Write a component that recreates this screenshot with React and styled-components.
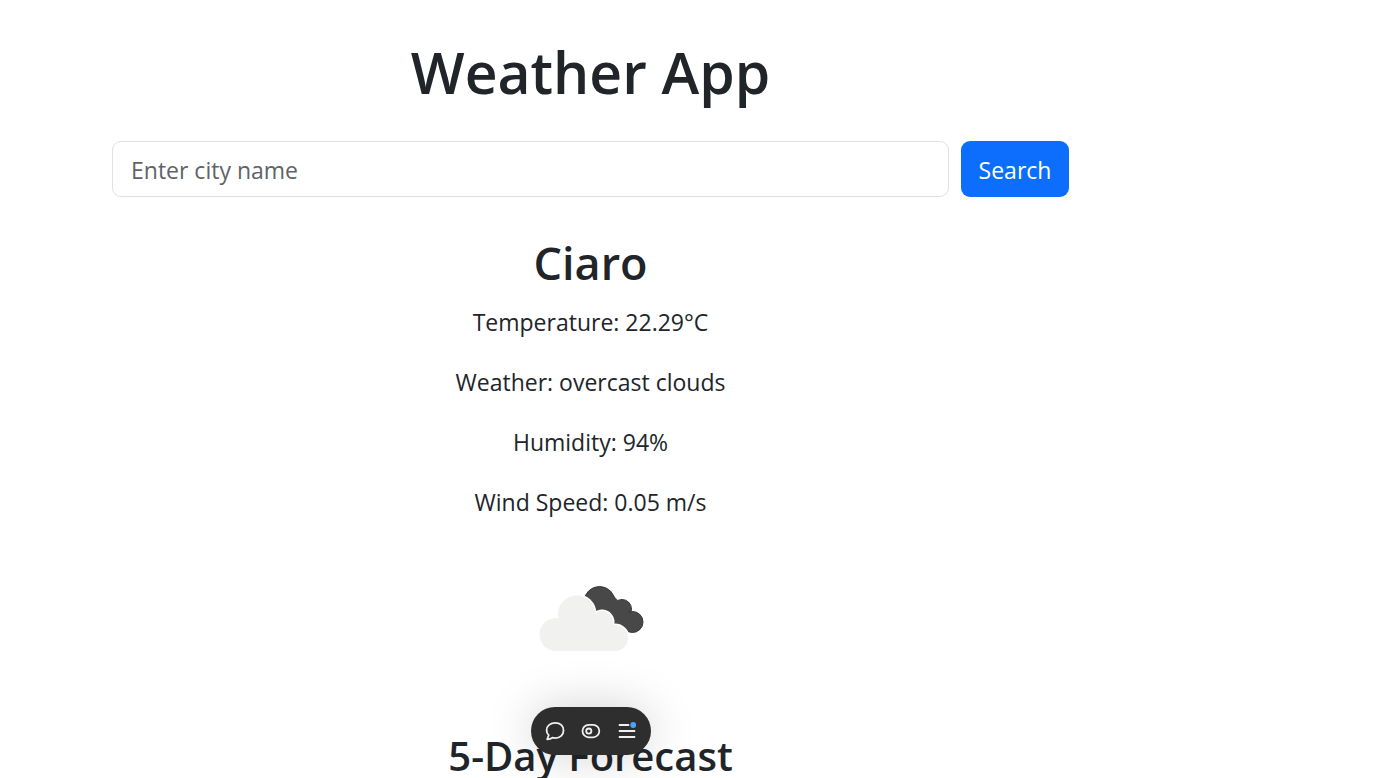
import React from "react";
import styled, { createGlobalStyle } from "styled-components";

const GlobalStyle = createGlobalStyle`
  *, *::before, *::after { box-sizing: border-box; }
  body {
    margin: 0;
    background: #fff;
    color: #212529;
    font-family: "Segoe UI", "Open Sans", "Noto Sans", sans-serif;
    font-size: 23px;
    line-height: 36px;
  }
`;

const Page = styled.main`
  padding: 36px 309px 24px 112px;
  text-align: center;
`;

const Title = styled.h1`
  margin: 0 0 33px;
  font-size: 57px;
  font-weight: 600;
  line-height: 72px;
`;

const SearchForm = styled.form`
  display: flex;
  gap: 12px;
  margin-bottom: 37px;
`;

const CityInput = styled.input`
  flex: 1;
  min-width: 0;
  height: 56px;
  padding: 10px 18px 8px;
  border: 1px solid #dee2e6;
  border-radius: 9px;
  background: #fff;
  color: inherit;
  font: inherit;
  &::placeholder { color: #5f6368; opacity: 1; }
`;

const SearchButton = styled.button`
  width: 108px;
  height: 56px;
  padding: 2px 0 0;
  border: 0;
  border-radius: 9px;
  background: #0d6efd;
  color: #fff;
  font: inherit;
  cursor: pointer;
`;

const City = styled.h2`
  margin: 0 0 12px;
  font-size: 45px;
  font-weight: 600;
  line-height: 58px;
`;

const Detail = styled.p`
  margin: 0 0 24px;
`;

const CloudIcon = styled.svg`
  display: block;
  width: 150px;
  height: 150px;
  margin: 0 auto 37px;
`;

const ForecastTitle = styled.h3`
  margin: 0;
  font-size: 40px;
  font-weight: 600;
  line-height: 50px;
`;

const ToolbarDock = styled.div`
  position: fixed;
  left: 0;
  right: 197px;
  bottom: 23px;
  display: flex;
  justify-content: center;
  pointer-events: none;
`;

const Toolbar = styled.div`
  display: flex;
  align-items: center;
  gap: 12px;
  height: 48px;
  padding: 0 12px;
  border-radius: 24px;
  background: #2e2e2e;
  box-shadow: 0 0 48px rgba(0, 0, 0, 0.18);
  pointer-events: auto;
`;

const ToolButton = styled.button`
  display: flex;
  padding: 0;
  border: 0;
  background: none;
  color: #f0f0f0;
  cursor: pointer;
`;

const ToolIcon = styled.svg`
  width: 24px;
  height: 24px;
  fill: none;
  stroke: currentColor;
  stroke-width: 1.8;
  stroke-linecap: round;
  stroke-linejoin: round;
`;

const details = [
  "Temperature: 22.29°C",
  "Weather: overcast clouds",
  "Humidity: 94%",
  "Wind Speed: 0.05 m/s",
];

export default function App() {
  return (
    <>
      <GlobalStyle />
      <Page>
        <Title>Weather App</Title>
        <SearchForm onSubmit={(e) => e.preventDefault()}>
          <CityInput type="text" placeholder="Enter city name" aria-label="City name" />
          <SearchButton type="submit">Search</SearchButton>
        </SearchForm>
        <City>Ciaro</City>
        {details.map((text) => (
          <Detail key={text}>{text}</Detail>
        ))}
        <CloudIcon viewBox="1 -1 150 150" role="img" aria-label="overcast clouds">
          <g fill="#484849" stroke="#38383a" strokeWidth="1">
            <circle cx="84.5" cy="57" r="15.5" />
            <circle cx="107" cy="64" r="9.5" />
            <circle cx="117.5" cy="77" r="10.5" />
          </g>
          <path d="M84 50h14l18 20v16h-12L84 68z" fill="#484849" />
          <g fill="#f1f1f0" stroke="#fff" strokeWidth="3">
            <circle cx="61.5" cy="69" r="18.5" />
            <circle cx="87" cy="77" r="11" />
            <circle cx="100" cy="93" r="13" />
          </g>
          <g fill="#f1f1f0">
            <circle cx="61.5" cy="69" r="18.5" />
            <circle cx="87" cy="77" r="11" />
            <circle cx="41" cy="89.5" r="16.5" />
            <path d="M41 73h40l19 7v26H41z" />
            <circle cx="100" cy="93" r="13" />
          </g>
        </CloudIcon>
        <ForecastTitle>5-Day Forecast</ForecastTitle>
      </Page>
      <ToolbarDock>
        <Toolbar role="toolbar" aria-label="Page tools">
          <ToolButton type="button" aria-label="Comments">
            <ToolIcon viewBox="0 0 24 24">
              <path d="M12.4 3.8C7.4 3.8 3.6 6.9 3.6 11.2c0 2 .8 3.700 2.100 5L4.200 20.300c2.200-.1 3.900-.6 5.200-1.600 1 .3 2 .4 3 .4 4.800 0 8.100-3.300 8.100-7.700s-3.300-7.600-8.100-7.600z" />
            </ToolIcon>
          </ToolButton>
          <ToolButton type="button" aria-label="Preview mode">
            <ToolIcon viewBox="0 0 24 24">
              <rect x="3.5" y="5.9" width="16.8" height="12.4" rx="6.2" />
              <circle cx="9.8" cy="12.1" r="2.6" />
            </ToolIcon>
          </ToolButton>
          <ToolButton type="button" aria-label="Menu">
            <ToolIcon viewBox="0 0 24 24">
              <path d="M4.500 6h9M4.500 12h15M4.500 18h15" />
              <circle cx="18.2" cy="6" r="2.9" fill="#47a3ff" stroke="none" />
            </ToolIcon>
          </ToolButton>
        </Toolbar>
      </ToolbarDock>
    </>
  );
}
